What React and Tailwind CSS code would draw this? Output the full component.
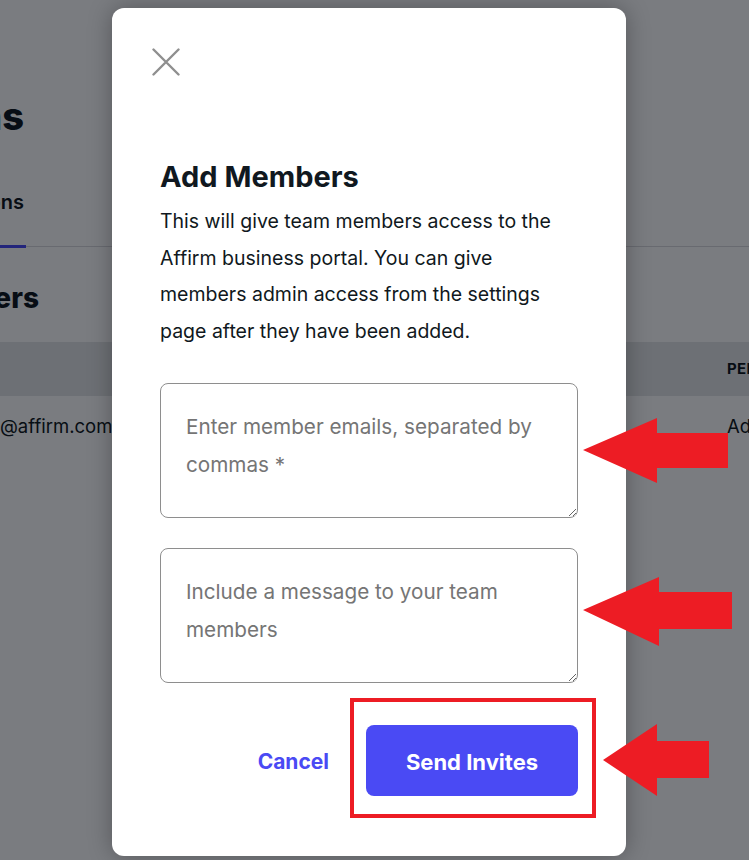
import React from "react";

const font = { fontFamily: "Inter, 'Noto Sans', sans-serif" };

// Text clipped on its left, ending at a given right edge
function Clipped({ width, className, children }) {
  return (
    <div className="flex justify-end overflow-hidden whitespace-nowrap" style={{ width }}>
      <span className={className}>{children}</span>
    </div>
  );
}

function PageBehind() {
  return (
    <div className="flex flex-col bg-white w-full h-full text-[#101820]">
      <div className="h-[92px]" />
      <Clipped width={24} className="text-[38px] font-extrabold leading-[48px]">Permissions</Clipped>
      <div className="h-[48px]" />
      <Clipped width={24} className="text-[20px] font-semibold leading-[28px]">Permissions</Clipped>
      <div className="h-[29px]" />
      <div className="relative h-[3px] w-full">
        <div className="absolute left-0 right-0 top-[1px] h-[1px] bg-[#d9d9de]" />
        <div className="absolute left-0 top-0 h-[3px] w-[26px] bg-[#4a4af4]" />
      </div>
      <div className="h-[32px]" />
      <Clipped width={39} className="text-[28px] font-extrabold leading-[36px]">Team Members</Clipped>
      <div className="h-[26px]" />
      <div className="flex items-center h-[54px] w-full bg-[#e4e5e8]">
        <div className="flex-1" />
        <div className="w-[22px] text-[15px] font-bold tracking-wide whitespace-nowrap overflow-visible">PERMISSIONS</div>
      </div>
      <div className="flex items-center h-[62px] w-full text-[18.5px]">
        <div className="flex-1 whitespace-nowrap">@affirm.com</div>
        <div className="w-[22px] whitespace-nowrap">Admin</div>
      </div>
    </div>
  );
}

export default function App() {
  return (
    <div className="relative w-[749px] h-[860px] overflow-hidden" style={font}>
      <PageBehind />
      <div className="absolute inset-0 bg-[rgba(0,4,12,0.52)]" />

      <div className="absolute left-[112px] top-[8px] w-[514px] h-[848px] bg-white rounded-[12px] shadow-[0_0_24px_rgba(0,0,0,0.3)] flex flex-col px-[48px] text-[#101820]">
        <button className="mt-[40px] ml-[-8px] w-[28px] h-[28px] flex items-center justify-center">
          <svg width="28" height="28" viewBox="0 0 28 28" fill="none" stroke="#8f8f8f" strokeWidth="2.4" strokeLinecap="round">
            <path d="M1.5 1.5 L26.5 26.5 M26.5 1.5 L1.5 26.5" />
          </svg>
        </button>

        <h2 className="mt-[84px] text-[29px] font-bold leading-[34px]">Add Members</h2>
        <p className="mt-[9px] text-[19.5px] leading-[36.5px] text-[#101820]">
          This will give team members access to the Affirm business portal. You can give members admin access from the settings page after they have been added.
        </p>

        <textarea
          className="mt-[34px] h-[135px] w-full rounded-[8px] border border-[#8e8e8e] px-[25px] pt-[24px] text-[20.7px] leading-[38px] placeholder:text-[#757575] outline-none resize-y"
          placeholder="Enter member emails, separated by commas *"
        />
        <textarea
          className="mt-[30px] h-[135px] w-full rounded-[8px] border border-[#8e8e8e] px-[25px] pt-[24px] text-[20.7px] leading-[38px] placeholder:text-[#757575] outline-none resize-y"
          placeholder="Include a message to your team members"
        />

        <div className="mt-[42px] flex items-center justify-end gap-[37px]">
          <button className="text-[21px] font-bold text-[#4a4af4] pt-[3px]">Cancel</button>
          <button className="w-[212px] h-[71px] rounded-[8px] bg-[#4a4af4] text-white text-[22px] font-bold pt-[3px]">Send Invites</button>
        </div>
      </div>

      {/* callout arrows and highlight box */}
      <svg className="absolute inset-0 pointer-events-none" width="749" height="860" viewBox="0 0 749 860">
        <polygon fill="#ed1c24" points="583,450 657,418 657,433 728,433 728,468 657,468 657,483" />
        <polygon fill="#ed1c24" points="583,610 659,577 659,592 732,592 732,629 659,629 659,646" />
        <polygon fill="#ed1c24" points="603,760 657,724 657,741 709,741 709,778 657,778 657,796" />
        <rect x="352" y="700" width="242" height="116" fill="none" stroke="#ed1c24" strokeWidth="4" />
      </svg>
    </div>
  );
}
